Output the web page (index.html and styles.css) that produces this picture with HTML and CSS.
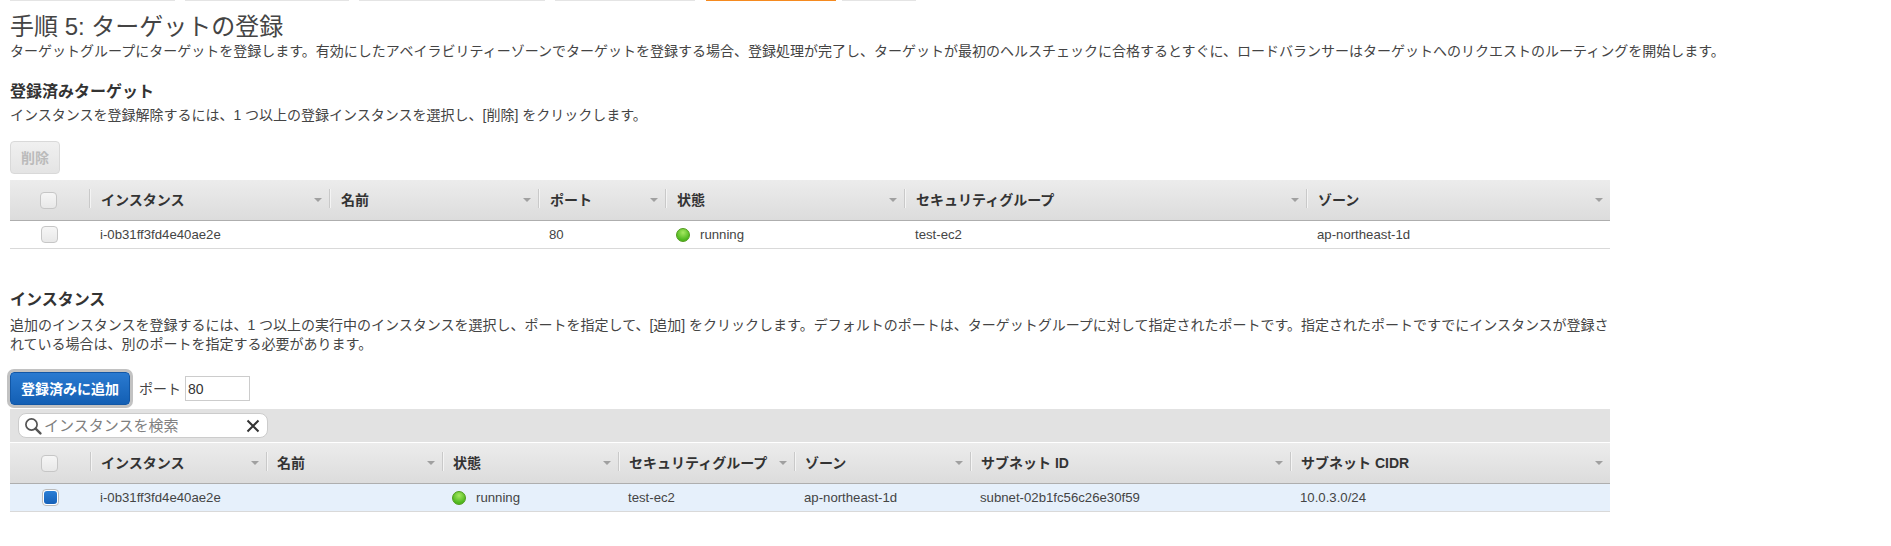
FILE: index.html
```html
<!DOCTYPE html>
<html lang="ja">
<head>
<meta charset="utf-8">
<title>手順 5: ターゲットの登録</title>
<link rel="stylesheet" href="styles.css">
</head>
<body>
<div class="steps">
  <span class="step s1"></span><span class="step s2"></span><span class="step s3"></span><span class="step s4"></span><span class="step s5 active"></span><span class="step s6"></span>
</div>
<h1>手順 5: ターゲットの登録</h1>
<p class="lead">ターゲットグループにターゲットを登録します。有効にしたアベイラビリティーゾーンでターゲットを登録する場合、登録処理が完了し、ターゲットが最初のヘルスチェックに合格するとすぐに、ロードバランサーはターゲットへのリクエストのルーティングを開始します。</p>

<h2 class="h-reg">登録済みターゲット</h2>
<p class="hint">インスタンスを登録解除するには、1 つ以上の登録インスタンスを選択し、[削除] をクリックします。</p>
<button class="btn-disabled" type="button">削除</button>

<div class="grid reg">
  <div class="th first"><span class="cb"></span></div>
  <div class="th"><b>インスタンス</b><i class="sort"></i></div>
  <div class="th"><b>名前</b><i class="sort"></i></div>
  <div class="th"><b>ポート</b><i class="sort"></i></div>
  <div class="th"><b>状態</b><i class="sort"></i></div>
  <div class="th"><b>セキュリティグループ</b><i class="sort"></i></div>
  <div class="th"><b>ゾーン</b><i class="sort"></i></div>
  <div class="td first"><span class="cb"></span></div>
  <div class="td">i-0b31ff3fd4e40ae2e</div>
  <div class="td"></div>
  <div class="td">80</div>
  <div class="td"><span class="dot"></span>running</div>
  <div class="td">test-ec2</div>
  <div class="td">ap-northeast-1d</div>
</div>

<h2 class="h-inst">インスタンス</h2>
<p class="para">追加のインスタンスを登録するには、1 つ以上の実行中のインスタンスを選択し、ポートを指定して、[追加] をクリックします。デフォルトのポートは、ターゲットグループに対して指定されたポートです。指定されたポートですでにインスタンスが登録されている場合は、別のポートを指定する必要があります。</p>

<div class="add-row">
  <button class="btn-primary" type="button">登録済みに追加</button>
  <label class="port-label" for="port">ポート</label>
  <input class="port" id="port" type="text" value="80">
</div>

<div class="toolbar">
  <div class="search">
    <svg class="ico-search" viewBox="0 0 18 18" width="18" height="18" aria-hidden="true"><circle cx="7.5" cy="7.5" r="5.6" fill="none" stroke="#555" stroke-width="1.7"/><path d="M11.6 11.6 16.4 16.4" stroke="#555" stroke-width="2.4" stroke-linecap="round"/></svg>
    <span class="placeholder">インスタンスを検索</span>
    <svg class="ico-x" viewBox="0 0 14 14" width="14" height="14" aria-hidden="true"><path d="M1.5 1.5 12.5 12.5M12.5 1.5 1.5 12.5" stroke="#333" stroke-width="2"/></svg>
  </div>
</div>

<div class="grid inst">
  <div class="th first"><span class="cb"></span></div>
  <div class="th"><b>インスタンス</b><i class="sort"></i></div>
  <div class="th"><b>名前</b><i class="sort"></i></div>
  <div class="th"><b>状態</b><i class="sort"></i></div>
  <div class="th"><b>セキュリティグループ</b><i class="sort"></i></div>
  <div class="th"><b>ゾーン</b><i class="sort"></i></div>
  <div class="th"><b>サブネット ID</b><i class="sort"></i></div>
  <div class="th"><b>サブネット CIDR</b><i class="sort"></i></div>
  <div class="td sel first"><span class="cb on"></span></div>
  <div class="td sel">i-0b31ff3fd4e40ae2e</div>
  <div class="td sel"></div>
  <div class="td sel"><span class="dot"></span>running</div>
  <div class="td sel">test-ec2</div>
  <div class="td sel">ap-northeast-1d</div>
  <div class="td sel">subnet-02b1fc56c26e30f59</div>
  <div class="td sel">10.0.3.0/24</div>
</div>
</body>
</html>
```
FILE: styles.css
```css
* { box-sizing: border-box; }
html, body { margin: 0; padding: 0; background: #fff; }
body {
  padding: 0 10px;
  font-family: "Liberation Sans", "Noto Sans CJK JP", sans-serif;
  font-size: 14px;
  line-height: 20px;
  color: #444;
  overflow: hidden;
}
.steps { display: flex; height: 1px; gap: 10px; }
.step { display: block; height: 1px; background: #e4e4e4; }
.s1 { width: 165px; }
.s2 { width: 164px; }
.s3 { width: 186px; }
.s4 { width: 140px; }
.s5 { width: 130px; margin-left: 1px; }
.s6 { width: 74px; margin-left: -4px; }
.step.active { background: #f58a1f; height: 1px; }

h1 {
  margin: 11px 0 0;
  font-size: 24px;
  line-height: 29px;
  font-weight: 400;
  color: #444;
}
.lead { margin: 0; white-space: nowrap; }
h2 { margin: 0; font-size: 16px; line-height: 20px; font-weight: 700; color: #333; }
.h-reg { margin-top: 21px; }
.hint { margin: 3px 0 0; }
.btn-disabled {
  display: block;
  margin: 16px 0 0;
  width: 50px;
  height: 33px;
  padding: 0;
  font: 700 14px/1 "Liberation Sans", "Noto Sans CJK JP", sans-serif;
  color: #bbb;
  background: linear-gradient(#f0f0f0, #e4e4e4);
  border: 1px solid #d9d9d9;
  border-radius: 4px;
}

.grid { display: grid; width: 1600px; }
.reg { margin-top: 6px; grid-template-columns: 79px 240px 209px 127px 239px 402px 304px; }
.inst { grid-template-columns: 80px 176px 176px 176px 176px 176px 320px 320px; }

.th {
  position: relative;
  height: 41px;
  display: flex;
  align-items: center;
  padding-left: 12px;
  background: linear-gradient(#ececec, #dcdcdc);
  border-bottom: 1px solid #aeaeae;
}
.th b { font-size: 14px; font-weight: 700; color: #333; }
.th::before {
  content: "";
  position: absolute;
  left: 0;
  top: 9px;
  height: 19px;
  width: 1px;
  background: #c9c9c9;
  box-shadow: 1px 0 0 #f4f4f4;
}
.th.first::before { display: none; }
.th.first { padding-left: 30px; }
.td.first { padding-left: 31px; }
.inst .th { padding-left: 11px; }
.inst .th.first { padding-left: 31px; }
.inst .td { padding-left: 10px; }
.inst .td.first { padding-left: 32px; }
.sort {
  position: absolute;
  right: 7px;
  top: 18px;
  width: 0;
  height: 0;
  border-left: 4px solid transparent;
  border-right: 4px solid transparent;
  border-top: 4px solid #a0a0a0;
}
.td {
  height: 28px;
  display: flex;
  align-items: center;
  padding-left: 11px;
  border-bottom: 1px solid #d9d9d9;
  font-size: 13.2px;
  color: #444;
}
.sel { background: #e6f0fb; }
.cb {
  display: block;
  width: 17px;
  height: 17px;
  border: 1px solid #c6c6c6;
  border-radius: 4px;
  background: linear-gradient(#f6f6f6, #e8e8e8);
}
.cb.on {
  position: relative;
  background: #fff;
  border-color: #bbb;
}
.cb.on::after {
  content: "";
  position: absolute;
  inset: 1px;
  border-radius: 3px;
  background: linear-gradient(#2b7fd6, #1560b8);
}
.dot {
  display: block;
  width: 14px;
  height: 14px;
  margin-right: 10px;
  border-radius: 50%;
  border: 1px solid #4f9a1a;
  background: radial-gradient(circle at 50% 30%, #a5e860, #4fb81e 70%);
}

.h-inst { margin-top: 41px; }
.para { margin: 6px 0 0; width: 1600px; line-height: 19px; }

.add-row { display: flex; align-items: center; margin-top: 18px; height: 33px; }
.btn-primary {
  width: 120px;
  height: 33px;
  padding: 0;
  font: 700 14px/1 "Liberation Sans", "Noto Sans CJK JP", sans-serif;
  color: #fff;
  background: linear-gradient(#2a7ad0, #135fb4);
  border: 1px solid #1257a6;
  border-radius: 4px;
  box-shadow: 0 0 0 3px #c2c2c2;
}
.port-label { margin-left: 9px; }
.port {
  width: 65px;
  height: 25px;
  margin-left: 4px;
  padding: 0 2px;
  font: 14px "Liberation Sans", sans-serif;
  color: #333;
  border: 1px solid #ccc;
  background: #fff;
}
.toolbar {
  display: flex;
  align-items: center;
  margin-top: 4px;
  padding-left: 8px;
  width: 1600px;
  height: 34px;
  background: #e2e2e2;
  border-bottom: 1px solid #fff;
}
.search {
  display: flex;
  align-items: center;
  width: 250px;
  height: 25px;
  padding: 0 7px 0 5px;
  background: #fff;
  border: 1px solid #ccc;
  border-radius: 8px;
}
.ico-search { flex: none; }
.placeholder { margin-left: 2px; font-size: 15px; color: #808080; flex: 1; }
.ico-x { flex: none; }
```
